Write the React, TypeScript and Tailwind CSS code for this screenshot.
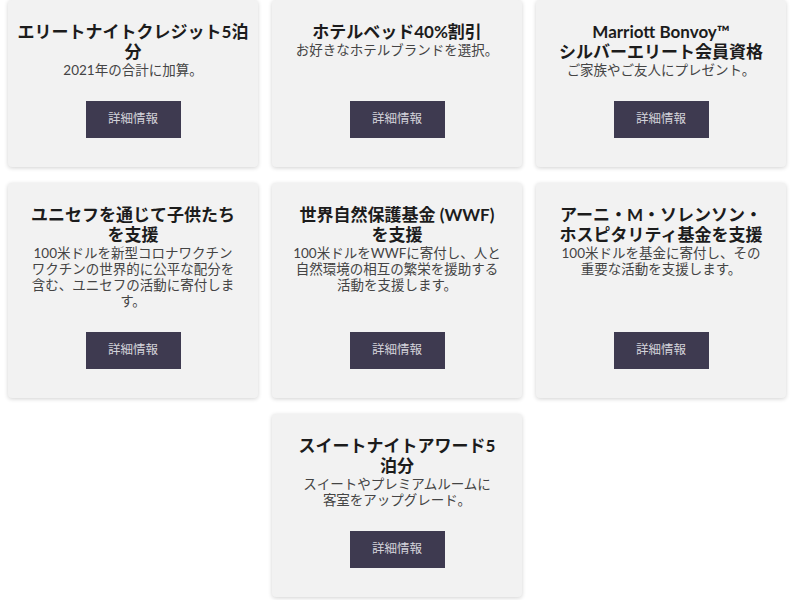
import React from "react";

type Offer = {
  title: string[];
  body: string[];
};

const offers: Offer[] = [
  { title: ["エリートナイトクレジット5泊", "分"], body: ["2021年の合計に加算。"] },
  { title: ["ホテルベッド40%割引"], body: ["お好きなホテルブランドを選択。"] },
  { title: ["Marriott Bonvoy™", "シルバーエリート会員資格"], body: ["ご家族やご友人にプレゼント。"] },
  {
    title: ["ユニセフを通じて子供たち", "を支援"],
    body: ["100米ドルを新型コロナワクチン", "ワクチンの世界的に公平な配分を", "含む、ユニセフの活動に寄付しま", "す。"],
  },
  {
    title: ["世界自然保護基金 (WWF)", "を支援"],
    body: ["100米ドルをWWFに寄付し、人と", "自然環境の相互の繁栄を援助する", "活動を支援します。"],
  },
  {
    title: ["アーニ・M・ソレンソン・", "ホスピタリティ基金を支援"],
    body: ["100米ドルを基金に寄付し、その", "重要な活動を支援します。"],
  },
];

const suite: Offer = {
  title: ["スイートナイトアワード5", "泊分"],
  body: ["スイートやプレミアムルームに", "客室をアップグレード。"],
};

function OfferCard({ offer }: { offer: Offer }) {
  return (
    <div className="flex w-[250px] flex-col items-center rounded-[4px] bg-[#f2f2f2] px-3 pt-[22px] pb-[29px] text-center shadow-[0_1px_4px_rgba(0,0,0,0.18)]">
      <h3 className="text-[17px] font-bold leading-[20px] text-[#1c1c1c]">
        {offer.title.map((line) => (
          <span key={line} className="block h-[20px] whitespace-nowrap">
            {line}
          </span>
        ))}
      </h3>
      <p className="text-[13.5px] leading-[16px] text-[#444]">
        {offer.body.map((line) => (
          <span key={line} className="block h-[16px] whitespace-nowrap">
            {line}
          </span>
        ))}
      </p>
      {/* spacer keeps buttons lined up along the bottom of a row */}
      <div className="min-h-[23px] flex-1" />
      <button className="h-[37px] w-[95px] shrink-0 bg-[#3e3a50] text-[12.5px] text-[#d4d3da]">
        詳細情報
      </button>
    </div>
  );
}

export default function App() {
  return (
    <div
      className="min-h-screen bg-white"
      style={{ fontFamily: '"Lato", "Noto Sans CJK JP", sans-serif' }}
    >
      <div className="flex flex-col gap-[16px] pl-[8px]">
        <div className="grid grid-cols-[250px_250px_250px] gap-x-[14px] gap-y-[16px]">
          {offers.map((o, i) => (
            <OfferCard key={i} offer={o} />
          ))}
        </div>
        <div className="flex pl-[264px]">
          <OfferCard offer={suite} />
        </div>
      </div>
    </div>
  );
}
